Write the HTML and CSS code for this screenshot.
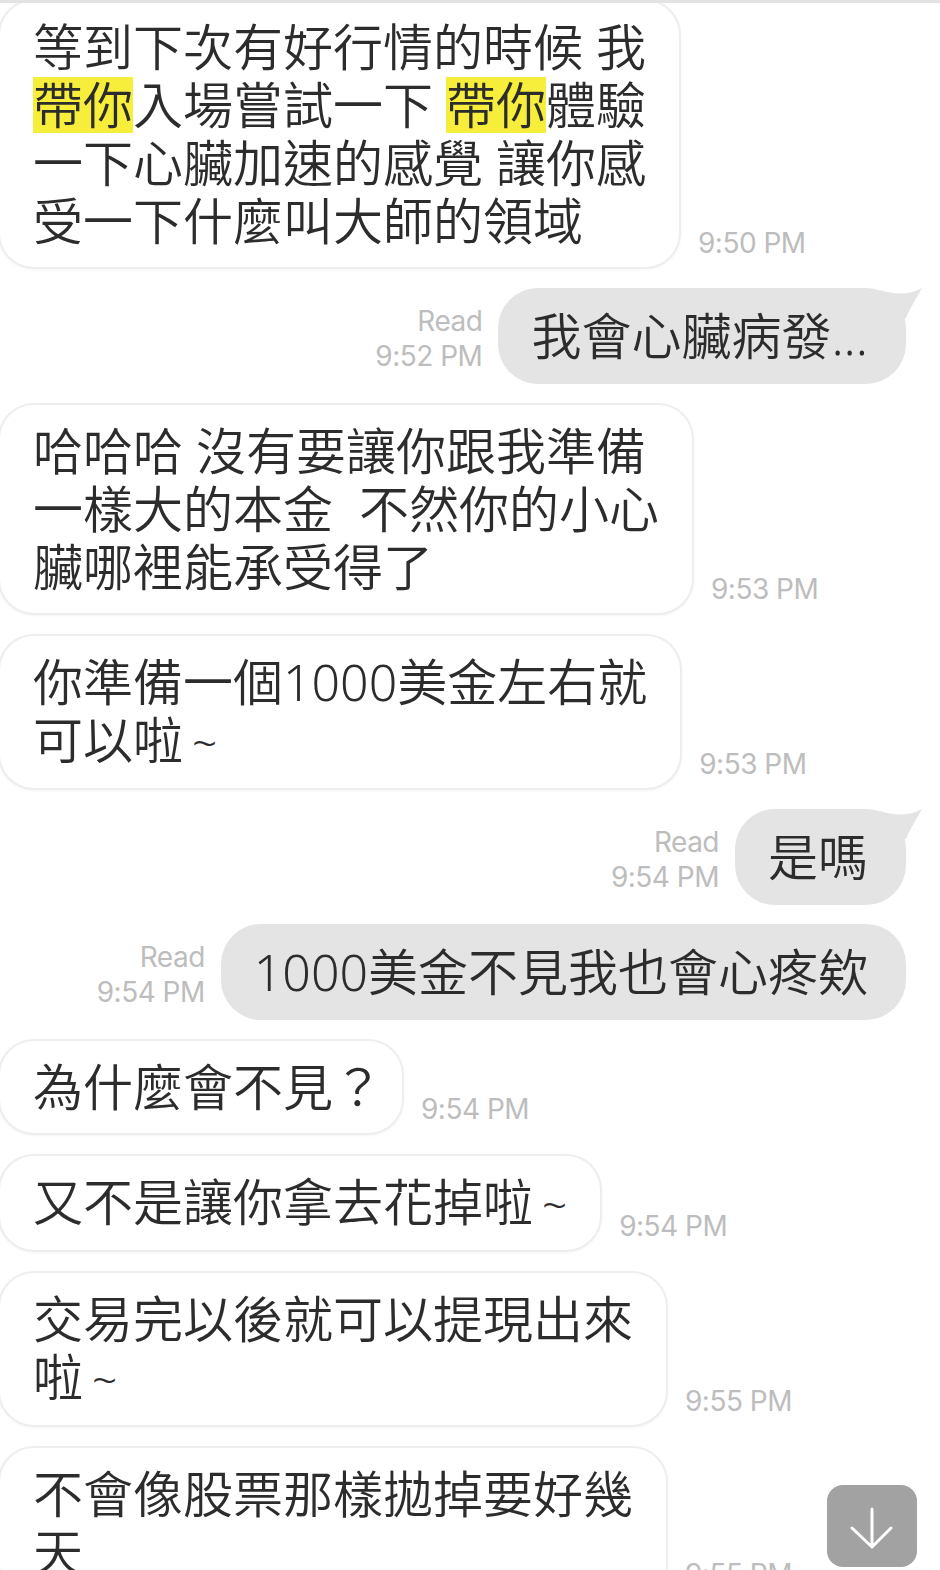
FILE: index.html
```html
<!DOCTYPE html>
<html lang="zh-Hant">
<head>
    <meta charset="UTF-8">
    <meta name="viewport" content="width=device-width, initial-scale=1.0">
    <title>聊天</title>
    <link rel="stylesheet" href="styles.css">
</head>
<body>

    <div class="topbar"></div>

    <div class="chat">
        <div class="row in">
            <div class="bubble">等到下次有好行情的時候 我<br><span class="hl">帶你</span>入場嘗試一下 <span class="hl">帶你</span>體驗<br>一下心臟加速的感覺 讓你感<br>受一下什麼叫大師的領域</div>
            <div class="meta">9:50 PM</div>
        </div>

        <div class="row out">
            <div class="meta"><span>Read</span><span>9:52 PM</span></div>
            <div class="bubble">我會心臟病發...<svg class="tail" viewBox="0 0 44 34" width="44" height="34"><path d="M0 4 C14 9 30 9 42 2 C38 10 32 18 26 32 L0 32 Z"/></svg></div>
        </div>

        <div class="row in">
            <div class="bubble">哈哈哈 沒有要讓你跟我準備<br>一樣大的本金&nbsp; 不然你的小心<br>臟哪裡能承受得了</div>
            <div class="meta">9:53 PM</div>
        </div>

        <div class="row in">
            <div class="bubble">你準備一個1000美金左右就<br>可以啦<span class="tilde">~</span></div>
            <div class="meta">9:53 PM</div>
        </div>

        <div class="row out">
            <div class="meta"><span>Read</span><span>9:54 PM</span></div>
            <div class="bubble">是嗎<svg class="tail" viewBox="0 0 44 34" width="44" height="34"><path d="M0 4 C14 9 30 9 42 2 C38 10 32 18 26 32 L0 32 Z"/></svg></div>
        </div>

        <div class="row out">
            <div class="meta"><span>Read</span><span>9:54 PM</span></div>
            <div class="bubble">1000美金不見我也會心疼欸</div>
        </div>

        <div class="row in">
            <div class="bubble">為什麼會不見<span class="qm">？</span></div>
            <div class="meta">9:54 PM</div>
        </div>

        <div class="row in">
            <div class="bubble">又不是讓你拿去花掉啦<span class="tilde">~</span></div>
            <div class="meta">9:54 PM</div>
        </div>

        <div class="row in">
            <div class="bubble">交易完以後就可以提現出來<br>啦<span class="tilde">~</span></div>
            <div class="meta">9:55 PM</div>
        </div>

        <div class="row in">
            <div class="bubble">不會像股票那樣拋掉要好幾<br>天</div>
            <div class="meta">9:55 PM</div>
        </div>
    </div>

    <button class="scroll-down" aria-label="scroll down">
        <svg viewBox="0 0 90 82" width="90" height="82"><path d="M45 24 V62 M25 43 L45 62 L64 43"/></svg>
    </button>

</body>
</html>
```

FILE: styles.css
```css
body {
    margin: 0;
    padding: 0;
    background: #fff;
    color: #2c2c2c;
    font-family: "Noto Sans", "Noto Sans CJK TC", sans-serif;
    height: 1570px;
    overflow: hidden;
}

.topbar {
    position: fixed;
    top: 0;
    left: 0;
    right: 0;
    height: 3px;
    background: #e3e3e3;
    z-index: 2;
}

.chat {
    display: flex;
    flex-direction: column;
    gap: 19px;
    margin-top: -1px;
}

.row {
    display: flex;
    align-items: flex-end;
}

.row.in {
    gap: 17px;
    margin-left: -2px;
}

.row.out {
    justify-content: flex-end;
    gap: 16px;
    padding-right: 34px;
}

.bubble {
    position: relative;
    font-size: 50px;
    font-weight: 350;
    line-height: 58px;
    padding: 19px 35px;
    border-radius: 36px;
    white-space: nowrap;
}

.in .bubble {
    background: #fff;
    border: 2px solid #eeeeee;
    padding: 17px 33px;
    box-shadow: 0 1px 3px rgba(0, 0, 0, 0.04);
}

.out .bubble {
    background: #e4e4e4;
    padding: 19px 38px 19px 33px;
    border-radius: 40px;
}

.tail {
    position: absolute;
    top: -2px;
    right: -18px;
    fill: #e4e4e4;
}

.hl {
    display: inline-block;
    background: #f7ee3c;
    line-height: 56px;
}

.tilde {
    margin-left: 9px;
    font-size: 44px;
}

.qm {
    margin-right: -14px;
}

.meta {
    display: flex;
    flex-direction: column;
    align-items: flex-end;
    font-family: "Inter", "Noto Sans", sans-serif;
    font-size: 28px;
    line-height: 35px;
    color: #bdbdbd;
    letter-spacing: -0.5px;
    padding-bottom: 8px;
    white-space: nowrap;
}

.out .meta {
    padding-bottom: 10px;
}

.scroll-down {
    position: fixed;
    right: 23px;
    bottom: 3px;
    width: 90px;
    height: 82px;
    padding: 0;
    border: none;
    border-radius: 16px;
    background: #a2a2a2;
}

.scroll-down svg {
    display: block;
    fill: none;
    stroke: #fff;
    stroke-width: 3;
    stroke-linecap: round;
    stroke-linejoin: round;
}
```
